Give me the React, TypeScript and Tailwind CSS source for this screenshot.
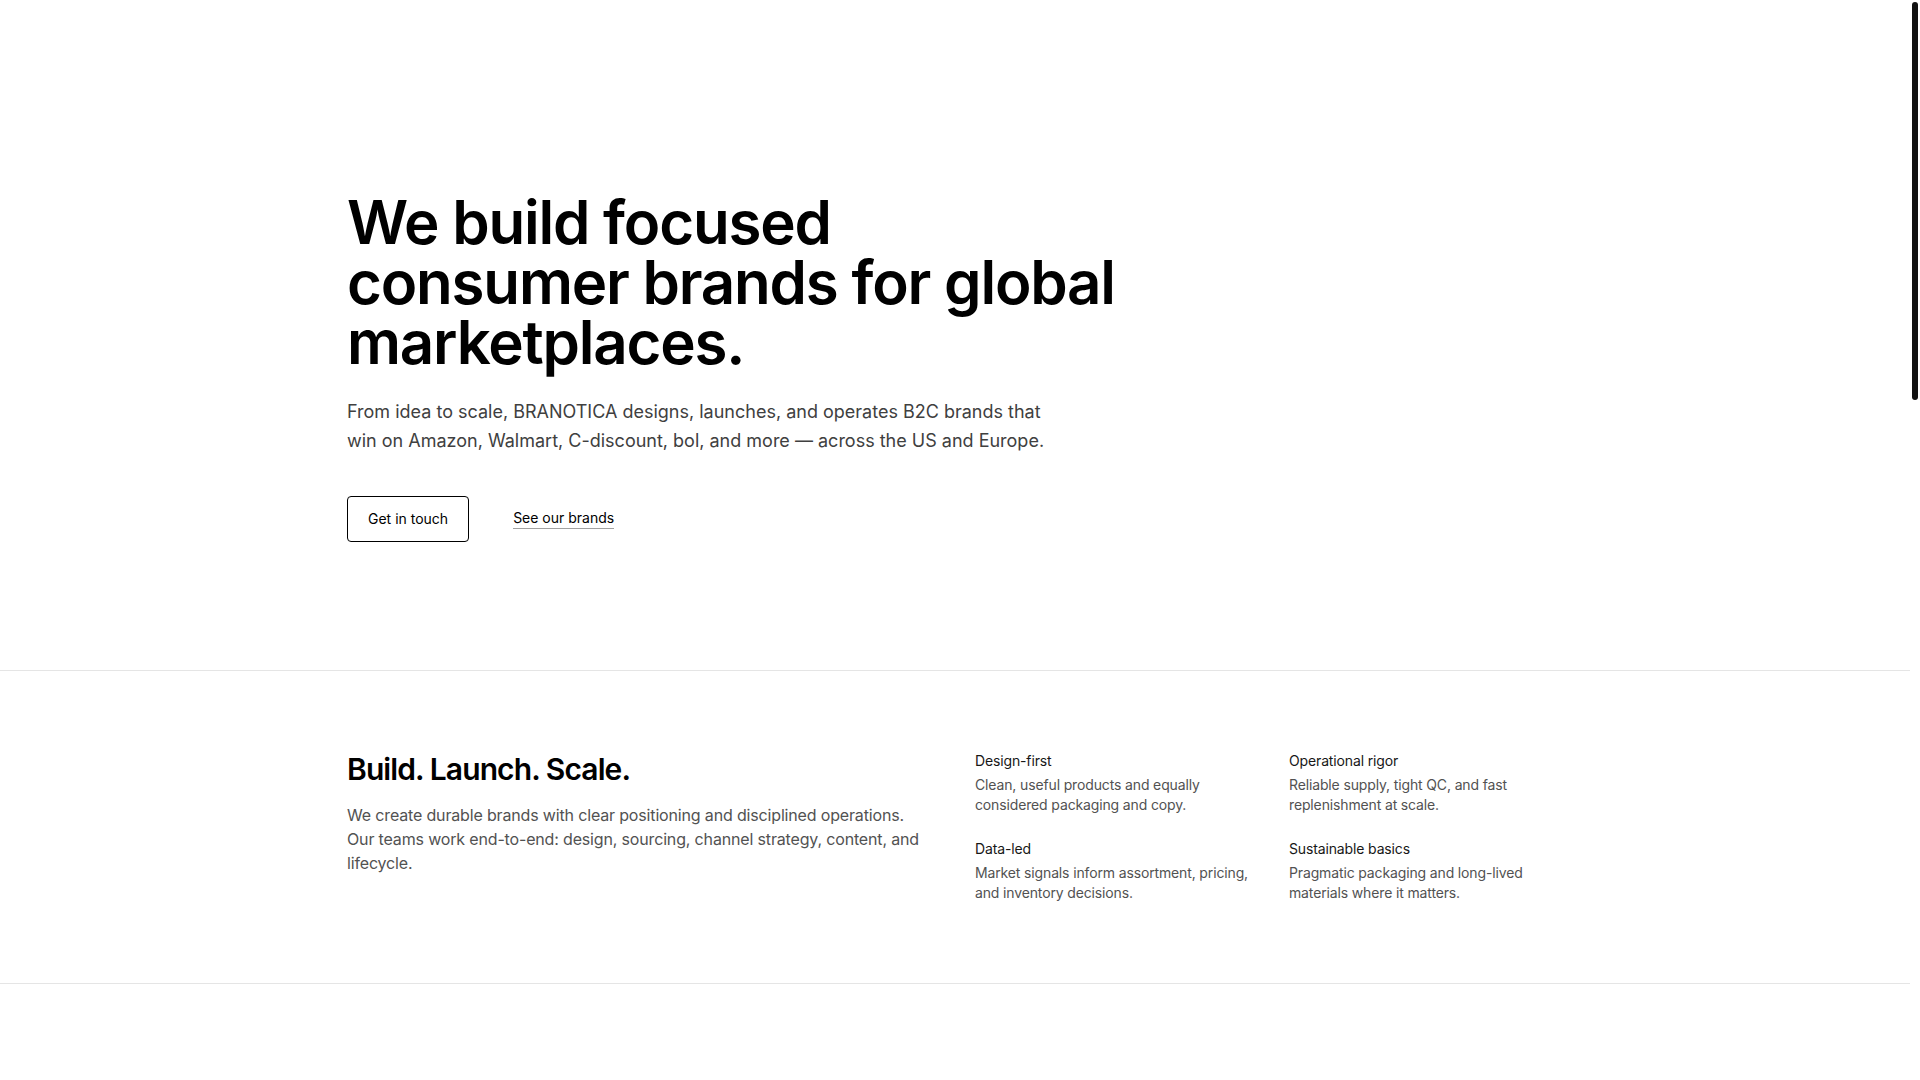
import React from "react";

const features = [
  {
    title: "Design-first",
    body: "Clean, useful products and equally considered packaging and copy.",
  },
  {
    title: "Operational rigor",
    body: "Reliable supply, tight QC, and fast replenishment at scale.",
  },
  {
    title: "Data-led",
    body: "Market signals inform assortment, pricing, and inventory decisions.",
  },
  {
    title: "Sustainable basics",
    body: "Pragmatic packaging and long-lived materials where it matters.",
  },
];

export default function App() {
  return (
    <div className="flex h-screen overflow-hidden bg-white text-neutral-950 [font-family:Inter,'Noto_Sans',sans-serif]">
      <main className="min-w-0 flex-1 overflow-y-auto [scrollbar-width:none]">
        <section>
          <div className="mx-auto max-w-7xl px-8 pt-48 pb-32">
            <h1 className="max-w-3xl text-6xl font-semibold leading-none tracking-[-0.02em] text-black">
              We build focused consumer brands for global marketplaces.
            </h1>
            <p className="mt-[25px] max-w-[720px] text-lg leading-relaxed text-neutral-700">
              From idea to scale, BRANOTICA designs, launches, and operates B2C brands that win on
              Amazon, Walmart, C-discount, bol, and more — across the US and Europe.
            </p>
            <div className="mt-10 flex items-center gap-6">
              <a
                href="#contact"
                className="inline-flex items-center rounded border border-black px-5 py-3 text-sm font-normal leading-5 text-black"
              >
                Get in touch
              </a>
              <a href="#brands" className="inline-flex items-center px-5 py-3 text-sm font-normal leading-5 text-black">
                <span className="border-b border-neutral-400">See our brands</span>
              </a>
            </div>
          </div>
        </section>

        <section className="border-t border-neutral-200">
          <div className="mx-auto grid max-w-7xl grid-cols-2 gap-10 px-8 py-20">
            <div>
              <h2 className="text-3xl font-semibold tracking-[-0.03em] text-black">Build. Launch. Scale.</h2>
              <p className="mt-4 text-base leading-6 tracking-[-0.01em] text-neutral-600">
                We create durable brands with clear positioning and disciplined operations. Our teams
                work end-to-end: design, sourcing, channel strategy, content, and lifecycle.
              </p>
            </div>
            <div className="grid grid-cols-2 gap-x-10 gap-y-6">
              {features.map((f) => (
                <div key={f.title}>
                  <h3 className="text-sm font-normal leading-5 tracking-[-0.01em] text-neutral-900">{f.title}</h3>
                  <p className="mt-1 text-sm leading-5 tracking-[-0.01em] text-neutral-600">{f.body}</p>
                </div>
              ))}
            </div>
          </div>
        </section>

        <section id="brands" className="border-t border-neutral-200">
          <div className="h-[400px]" />
        </section>
      </main>

      <div className="flex w-[10px] shrink-0 flex-col bg-white px-[2px] pt-[2px]">
        <div className="h-[398px] w-full rounded-full bg-[#111111]" />
      </div>
    </div>
  );
}
